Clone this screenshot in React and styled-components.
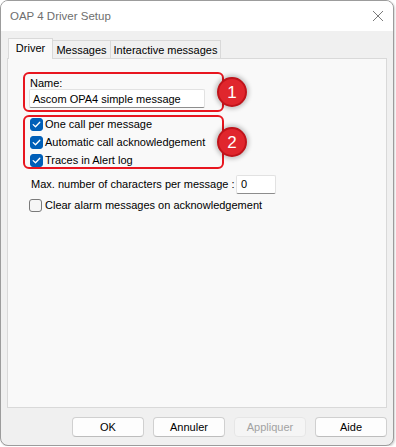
import React from "react";
import styled, { createGlobalStyle } from "styled-components";

const Global = createGlobalStyle`
  html, body { margin: 0; padding: 0; background: #ffffff; }
  body { font-family: "Liberation Sans", Arial, sans-serif; font-size: 11px; color: #000; }
  * { box-sizing: border-box; }
`;

const Window = styled.div`
  width: 394px;
  height: 446px;
  border: 1px solid #9c9c9c;
  border-radius: 8px;
  background: #f0f0f0;
  display: flex;
  flex-direction: column;
  overflow: hidden;
  box-shadow: 1px 1px 2px rgba(0,0,0,0.18);
`;

const TitleBar = styled.div`
  height: 30px;
  flex: none;
  background: #ffffff;
  display: flex;
  align-items: center;
  justify-content: space-between;
  padding: 0 8px 0 9px;
`;

const Title = styled.span`
  font-size: 11.5px;
  color: #6e6e6e;
  padding-bottom: 1px;
`;

const CloseIcon = styled.svg`
  width: 12px;
  height: 12px;
  margin-right: 1px;
  margin-bottom: 1px;
`;

const Body = styled.div`
  flex: 1;
  display: flex;
  flex-direction: column;
  padding: 7px 6px 8px 6px;
  min-height: 0;
`;

const TabStrip = styled.div`
  height: 20px;
  display: flex;
  align-items: flex-end;
  padding-left: 1px;
  position: relative;
  z-index: 2;
`;

const Tab = styled.div`
  width: ${p => p.$w}px;
  height: ${p => (p.$active ? 21 : 18)}px;
  margin-bottom: ${p => (p.$active ? -1 : 0)}px;
  margin-left: ${p => (p.$first ? 0 : -1)}px;
  background: ${p => (p.$active ? "#f9f9f9" : "#f0f0f0")};
  border: 1px solid #d9d9d9;
  border-bottom: none;
  display: flex;
  align-items: center;
  justify-content: center;
  padding-bottom: ${p => (p.$active ? 2 : 0)}px;
  white-space: nowrap;
`;

const Panel = styled.div`
  flex: 1;
  background: #f9f9f9;
  border: 1px solid #d9d9d9;
  display: flex;
  flex-direction: column;
  padding: 13px 0 0 0;
  position: relative;
  z-index: 1;
`;

const Group = styled.div`
  position: relative;
  margin-left: 15px;
  width: 201px;
  height: ${p => p.$h}px;
  border: 2px solid #e8161f;
  border-radius: 6px;
  display: flex;
  flex-direction: column;
  justify-content: ${p => p.$justify || "flex-start"};
  padding: ${p => p.$pad};
  & + & { margin-top: 3px; }
`;

const Badge = styled.div`
  position: absolute;
  right: -25px;
  top: 50%;
  transform: translateY(-50%);
  width: 30px;
  height: 30px;
  border-radius: 50%;
  background: #e0262d;
  border: 2px solid #c0141b;
  box-shadow: 0 0 4px 2px rgba(0,0,0,0.22);
  color: #ffffff;
  font-size: 17px;
  display: flex;
  align-items: center;
  justify-content: center;
  padding-top: 1px;
`;

const Label = styled.div`
  line-height: 14px;
  height: 15px;
  padding-left: 1px;
  padding-top: 2px;
`;

const TextBox = styled.div`
  width: ${p => p.$w}px;
  height: ${p => p.$h}px;
  flex: none;
  background: #ffffff;
  border: 1px solid #e2e2e2;
  border-bottom-color: #8d8d8d;
  border-radius: 2px;
  display: flex;
  align-items: center;
  padding-left: ${p => p.$pl || 3}px;
  white-space: nowrap;
  overflow: hidden;
`;

const CheckRow = styled.label`
  display: flex;
  align-items: center;
  flex: none;
  height: ${p => p.$h || 18}px;
  gap: ${p => p.$gap || 2}px;
  white-space: nowrap;
`;

const Box = styled.span`
  width: 13px;
  height: 13px;
  flex: none;
  border-radius: 3px;
  background: ${p => (p.$checked ? "#005fb8" : "#f6f6f6")};
  border: 1px solid ${p => (p.$checked ? "#005fb8" : "#7a7a7a")};
  display: flex;
  align-items: center;
  justify-content: center;
`;

const FieldRow = styled.div`
  display: flex;
  align-items: center;
  margin-top: 6px;
  padding-left: 23px;
  height: 18px;
`;

const FieldLabel = styled.span`
  width: 205px;
  white-space: nowrap;
`;

const ClearRow = styled.div`
  margin-top: 5px;
  padding-left: 21px;
`;

const ButtonRow = styled.div`
  margin-top: 9px;
  height: 20px;
  display: flex;
  justify-content: flex-end;
  gap: 9px;
`;

const Button = styled.div`
  width: 72px;
  height: 20px;
  border-radius: 4px;
  border: 1px solid ${p => (p.$disabled ? "#e6e6e6" : "#d0d0d0")};
  border-bottom-color: ${p => (p.$disabled ? "#e6e6e6" : "#bdbdbd")};
  background: ${p => (p.$disabled ? "#f5f5f5" : "#fdfdfd")};
  color: ${p => (p.$disabled ? "#a2a2a2" : "#000")};
  display: flex;
  align-items: center;
  justify-content: center;
`;

const Check = ({ checked }) => (
  <Box $checked={checked}>
    {checked && (
      <svg width="9" height="9" viewBox="0 0 9 9">
        <path d="M1.2 4.6 L3.5 6.8 L7.8 2.2" fill="none" stroke="#fff" strokeWidth="1.3" strokeLinecap="round" strokeLinejoin="round" />
      </svg>
    )}
  </Box>
);

export default function App() {
  return (
    <>
      <Global />
      <Window>
        <TitleBar>
          <Title>OAP 4 Driver Setup</Title>
          <CloseIcon viewBox="0 0 12 12">
            <path d="M1 1 L11 11 M11 1 L1 11" stroke="#7a7a7a" strokeWidth="1" fill="none" />
          </CloseIcon>
        </TitleBar>
        <Body>
          <TabStrip>
            <Tab $active $first $w={45}>Driver</Tab>
            <Tab $w={59}>Messages</Tab>
            <Tab $w={111}>Interactive messages</Tab>
          </TabStrip>
          <Panel>
            <Group $h={40} $pad="0 0 0 4px">
              <Label>Name:</Label>
              <TextBox $w={176} $h={19}>Ascom OPA4 simple message</TextBox>
              <Badge>1</Badge>
            </Group>
            <Group $h={54} $pad="0 0 0 5px" $justify="center">
              <CheckRow><Check checked />One call per message</CheckRow>
              <CheckRow><Check checked />Automatic call acknowledgement</CheckRow>
              <CheckRow><Check checked />Traces in Alert log</CheckRow>
              <Badge>2</Badge>
            </Group>
            <FieldRow>
              <FieldLabel>Max. number of characters per message :</FieldLabel>
              <TextBox $w={40} $h={19} $pl={4}>0</TextBox>
            </FieldRow>
            <ClearRow>
              <CheckRow $h={14} $gap={3}><Check />Clear alarm messages on acknowledgement</CheckRow>
            </ClearRow>
          </Panel>
          <ButtonRow>
            <Button>OK</Button>
            <Button>Annuler</Button>
            <Button $disabled>Appliquer</Button>
            <Button>Aide</Button>
          </ButtonRow>
        </Body>
      </Window>
    </>
  );
}
